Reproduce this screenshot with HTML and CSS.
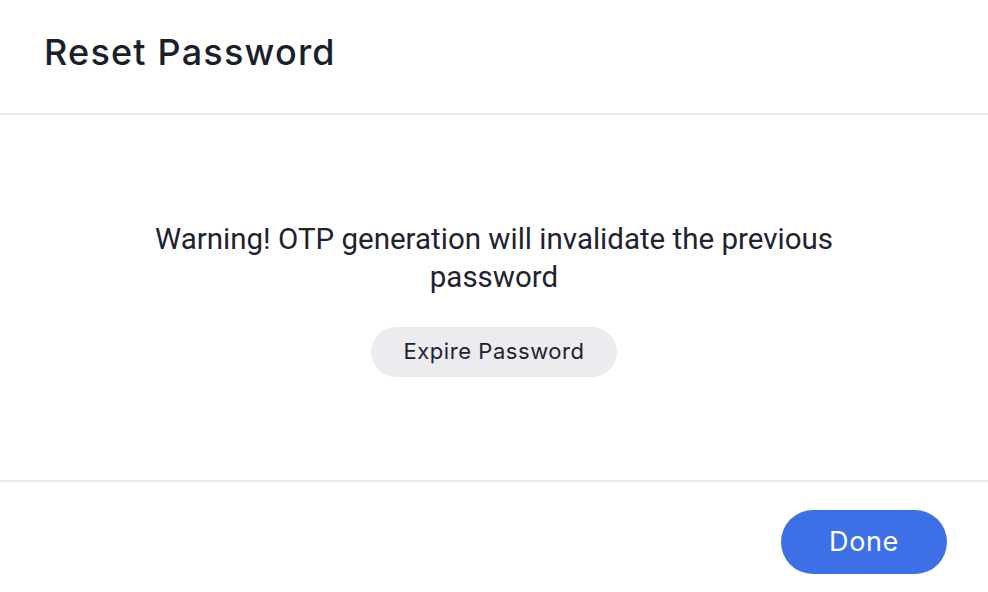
FILE: index.html
```html
<!DOCTYPE html>
<html>
<head>
<meta charset="utf-8">
<link rel="stylesheet" href="styles.css">
</head>
<body>
<div class="modal">
  <header class="modal-header">
    <h1 class="title">Reset Password</h1>
  </header>
  <main class="modal-body">
    <p class="warning">Warning! OTP generation will invalidate the previous password</p>
    <button class="btn-secondary">Expire Password</button>
  </main>
  <footer class="modal-footer">
    <button class="btn-primary">Done</button>
  </footer>
</div>
</body>
</html>
```
FILE: styles.css
```css
* { box-sizing: border-box; }
html, body { margin: 0; padding: 0; background: #fff; }
body { font-family: Inter, "Noto Sans", sans-serif; color: #1f2330; }
.modal { width: 988px; height: 592px; display: flex; flex-direction: column; }
.modal-header { height: 115px; border-bottom: 2px solid #ebebef; padding: 0 44px; display: flex; align-items: center; }
.title { margin: 0; font-size: 36px; font-weight: 500; letter-spacing: 1.2px; padding-bottom: 10px; color: #1b1f2b; }
.modal-body { height: 367px; border-bottom: 2px solid #ebebef; display: flex; flex-direction: column; align-items: center; padding-top: 105px; }
.warning { margin: 0; width: 720px; text-align: center; font-family: Roboto, sans-serif; font-size: 29.5px; line-height: 38px; font-weight: 400; color: #1f2330; }
.btn-secondary { margin-top: 31px; width: 246px; height: 50px; padding: 0 0 3px; border: none; border-radius: 25px; background: #ebebf0; font-family: Inter, sans-serif; font-size: 22px; letter-spacing: 0.55px; color: #1f2330; cursor: pointer; }
.modal-footer { flex: 1; display: flex; justify-content: flex-end; align-items: flex-start; padding: 28px 41px 0 0; }
.btn-primary { width: 166px; height: 64px; padding: 0 0 2px; border: none; border-radius: 32px; background: #3d70e7; color: #fff; font-family: Inter, sans-serif; font-size: 27px; letter-spacing: 0.6px; font-weight: 400; cursor: pointer; }
```
